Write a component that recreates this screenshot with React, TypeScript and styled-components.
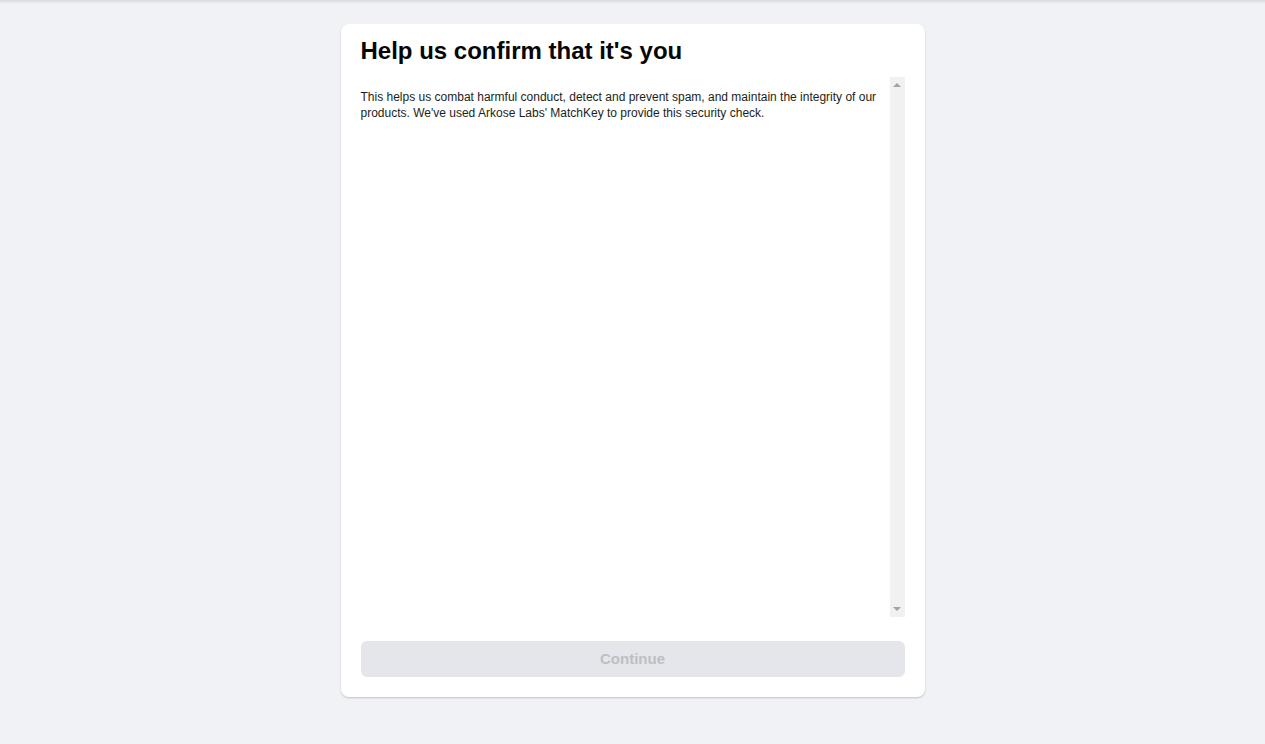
import React from 'react';
import styled, { createGlobalStyle } from 'styled-components';

const GlobalStyle = createGlobalStyle`
  html, body {
    margin: 0;
    padding: 0;
    background: #f0f2f5;
    font-family: Helvetica, 'Liberation Sans', Arial, sans-serif;
  }
`;

const Page = styled.div`
  min-height: 744px;
  background: #f0f2f5;
  display: flex;
  flex-direction: column;
  align-items: center;
`;

const TopShade = styled.div`
  align-self: stretch;
  height: 4px;
  background: linear-gradient(rgba(0, 0, 0, 0.1), rgba(0, 0, 0, 0));
  margin-bottom: 20px;
`;

const Card = styled.div`
  width: 584px;
  box-sizing: border-box;
  background: #fff;
  border-radius: 8px;
  box-shadow: 0 1px 2px rgba(0, 0, 0, 0.2);
  padding: 13px 20px 20px;
  display: flex;
  flex-direction: column;
`;

const Title = styled.h2`
  margin: 0 0 12px;
  font-size: 24px;
  line-height: 28px;
  font-weight: 700;
  color: #050505;
`;

const Frame = styled.div`
  height: 540px;
  display: flex;
`;

const FrameBody = styled.div`
  flex: 1;
  padding-top: 12px;
`;

const Description = styled.p`
  margin: 0;
  font-size: 12px;
  line-height: 16px;
  color: #1c1e21;
`;

const Scrollbar = styled.div`
  width: 15px;
  background: #f1f1f1;
  display: flex;
  flex-direction: column;
  justify-content: space-between;
  align-items: center;
  padding: 6px 0;
  box-sizing: border-box;
`;

const Arrow = styled.div<{ $down?: boolean }>`
  width: 0;
  height: 0;
  border-left: 4px solid transparent;
  border-right: 4px solid transparent;
  ${(p) =>
    p.$down
      ? 'border-top: 4px solid #a3a3a3;'
      : 'border-bottom: 4px solid #a3a3a3;'}
`;

const ContinueButton = styled.button`
  margin-top: 24px;
  height: 36px;
  padding: 0 0 2px;
  border: none;
  border-radius: 6px;
  background: #e4e6eb;
  color: #bcc0c4;
  font-family: inherit;
  font-size: 15px;
  font-weight: 700;
  cursor: not-allowed;
`;

const App: React.FunctionComponent = () => {
  return (
    <>
      <GlobalStyle />
      <Page>
        <TopShade />
        <Card>
          <Title>Help us confirm that it's you</Title>
          <Frame>
            <FrameBody>
              <Description>
                This helps us combat harmful conduct, detect and prevent spam,
                and maintain the integrity of our products. We've used Arkose
                Labs' MatchKey to provide this security check.
              </Description>
            </FrameBody>
            <Scrollbar>
              <Arrow />
              <Arrow $down />
            </Scrollbar>
          </Frame>
          <ContinueButton disabled>Continue</ContinueButton>
        </Card>
      </Page>
    </>
  );
};

export default App;
